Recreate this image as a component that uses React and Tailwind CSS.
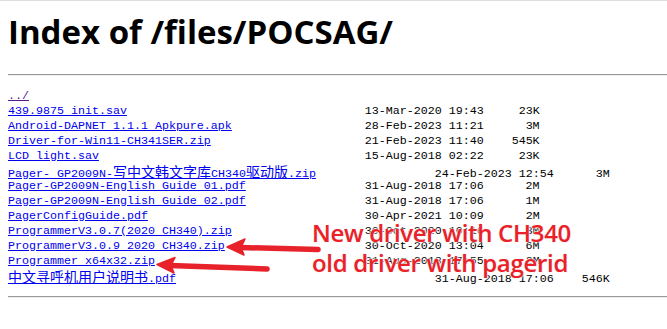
import React from 'react';

const rows = [
  ['439.9875 init.sav', '13-Mar-2020 19:43', '23K'],
  ['Android-DAPNET 1.1.1 Apkpure.apk', '28-Feb-2023 11:21', '3M'],
  ['Driver-for-Win11-CH341SER.zip', '21-Feb-2023 11:40', '545K'],
  ['LCD light.sav', '15-Aug-2018 02:22', '23K'],
  ['Pager- GP2009N-写中文韩文字库CH340驱动版.zip', '24-Feb-2023 12:54', '3M'],
  ['Pager-GP2009N-English Guide 01.pdf', '31-Aug-2018 17:06', '2M'],
  ['Pager-GP2009N-English Guide 02.pdf', '31-Aug-2018 17:06', '1M'],
  ['PagerConfigGuide.pdf', '30-Apr-2021 10:09', '2M'],
  ['ProgrammerV3.0.7(2020 CH340).zip', '30-Oct-2020 10:16', '3M'],
  ['ProgrammerV3.0.9 2020 CH340.zip', '30-Oct-2020 13:04', '6M'],
  ['Programmer x64x32.zip', '31-Aug-2018 17:55', '2M'],
  ['中文寻呼机用户说明书.pdf', '31-Aug-2018 17:06', '546K'],
];

// CJK glyphs are double width in the listing, so give them their own font
const Name = ({ text }) =>
  text.split(/([\u4e00-\u9fff]+)/).map((part, i) =>
    /[\u4e00-\u9fff]/.test(part) ? (
      <span key={i} className="text-[14px] font-['Noto_Sans_CJK_SC',sans-serif]">{part}</span>
    ) : (
      part
    )
  );

const Rule = () => <hr className="h-0 border-0 border-t border-t-[#9a9a9a] border-b border-b-[#eeeeee]" />;

export default function App() {
  return (
    <div className="relative min-h-screen bg-white border-t border-[#dddddd] overflow-hidden">
      <div className="pl-2">
        <h1 className="pt-[12px] pb-[23px] text-[33px] leading-[38px] font-bold text-black font-['Open_Sans',sans-serif]">
          Index of /files/POCSAG/
        </h1>
        <Rule />
        <div className="pt-[13px] pb-[12px] font-['Liberation_Mono',monospace] text-[11.67px] text-black">
          <div className="h-[15px] leading-[15px] whitespace-pre">
            <a href="#" className="text-[#551a8b] underline">../</a>
          </div>
          {rows.map(([name, date, size]) => (
            <div key={name} className="h-[15px] leading-[15px] whitespace-pre">
              <a href="#" className="text-[#0000ee] underline"><Name text={name} /></a>
              {' '.repeat(51 - name.length) + date + ' ' + size.padStart(7)}
            </div>
          ))}
        </div>
        <Rule />
      </div>

      <svg className="absolute left-0 top-0" width="667" height="329" viewBox="0 0 667 329">
        <g fill="#e8222a" stroke="#e8222a" strokeLinecap="round" strokeLinejoin="round">
          <line x1="318" y1="248.5" x2="240" y2="246.5" strokeWidth="5.5" />
          <path d="M227 246 L245 238 L241 246.3 L244 254 Z" strokeWidth="1.5" />
          <line x1="267" y1="268" x2="170" y2="264.5" strokeWidth="5.5" />
          <path d="M157 263.5 L175 256.5 L171 264.5 L174 272 Z" strokeWidth="1.5" />
        </g>
      </svg>

      <div className="absolute left-[312px] top-[217px] text-[24px] leading-[30px] font-semibold tracking-[-0.3px] text-[#ec2027] font-['Open_Sans',sans-serif] whitespace-pre [text-shadow:0_0_2px_#fff,0_0_3px_#fff,0_0_1px_#999]">
        <div>New driver with CH340</div>
        <div>old driver with pagerid</div>
      </div>
    </div>
  );
}
